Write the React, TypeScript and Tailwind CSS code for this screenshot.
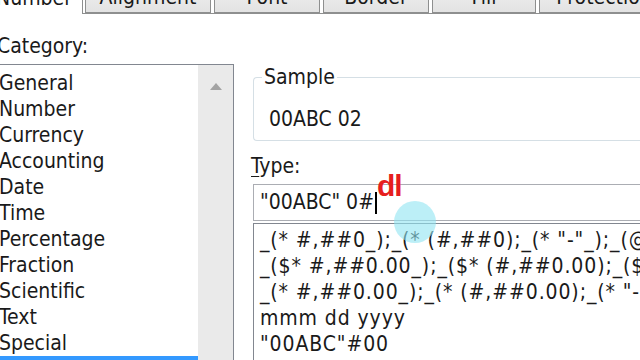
import React from 'react';

const categories = [
  'General',
  'Number',
  'Currency',
  'Accounting',
  'Date',
  'Time',
  'Percentage',
  'Fraction',
  'Scientific',
  'Text',
  'Special',
  'Custom',
];

const types = [
  '_(* #,##0_);_(* (#,##0);_(* "-"_);_(@_)',
  '_($* #,##0.00_);_($* (#,##0.00);_($* "-"??_);_(@_)',
  '_(* #,##0.00_);_(* (#,##0.00);_(* "-"??_);_(@_)',
  'mmm dd yyyy',
  '"00ABC"#00',
];

const tabs = [
  { label: 'Alignment', w: 'w-[126px]' },
  { label: 'Font', w: 'w-[106px]' },
  { label: 'Border', w: 'w-[106px]' },
  { label: 'Fill', w: 'w-[104px]' },
  { label: 'Protection', w: 'w-[130px]' },
];

const App: React.FC = () => {
  return (
    <div
      className="relative w-[640px] h-[360px] overflow-hidden bg-white text-[21px] text-[#1a1a1a]"
      style={{ fontFamily: '"DejaVu Sans Condensed", "DejaVu Sans", Tahoma, sans-serif' }}
    >
      {/* tab strip */}
      <div className="-mt-[20px] h-[34px] flex items-stretch">
        <div className="-ml-[14px] w-[97px] shrink-0 flex items-center justify-center border-r border-[#8e8f8f] bg-white leading-none pt-[2px]">
          Number
        </div>
        <div className="flex-1 min-w-0 flex items-stretch gap-[3px] pl-[2px] border-b border-[#8e8f8f] overflow-hidden">
          {tabs.map(t => (
            <div
              key={t.label}
              className={`${t.w} shrink-0 flex items-center justify-center border border-[#8e8f8f] bg-gradient-to-b from-[#f2f2f2] to-[#e3e3e3] leading-none pt-[2px]`}
            >
              {t.label}
            </div>
          ))}
        </div>
      </div>

      <div className="flex">
        {/* left column */}
        <div className="-ml-[3px] w-[237px] shrink-0 flex flex-col">
          <div className="mt-[19px] h-[26px] leading-[26px]">Category:</div>
          <div className="mt-[5px] h-[300px] flex border-t border-r border-[#828790]">
            <div className="flex-1 pt-[5px]">
              {categories.map(c => (
                <div
                  key={c}
                  className={`h-[26px] leading-[26px] pl-[2px] ${c === 'Custom' ? 'bg-[#3399ff] text-white' : ''}`}
                >
                  {c}
                </div>
              ))}
            </div>
            <div className="w-[35px] bg-[#eaeaea] flex justify-center pt-[18px]">
              <svg width="12" height="7" viewBox="0 0 12 7">
                <path d="M6 0 L12 7 L0 7 Z" fill="#a3a3a3" />
              </svg>
            </div>
          </div>
        </div>

        {/* right column */}
        <div className="ml-[19px] flex-1 flex flex-col">
          <div className="mt-[63px] relative h-[64px] border border-[#d5dfe5] rounded-[4px] rounded-r-none border-r-0">
            <div className="absolute -top-[14px] left-[8px] bg-white px-[2px] h-[26px] leading-[26px]">Sample</div>
            <div className="pl-[15px] pt-[28px] h-[26px] leading-[26px]">00ABC 02</div>
          </div>
          <div className="mt-[12px] -ml-[2px] h-[26px] leading-[26px]">
            <span className="underline underline-offset-[3px] decoration-1">T</span>ype:
          </div>
          <div className="mt-[5px] h-[37px] border border-r-0 border-[#abadb3] flex items-center pl-[6px]">
            <span>"00ABC" 0#</span>
            <span className="ml-[1px] w-[2px] h-[22px] bg-black" />
          </div>
          <div className="mt-[2px] flex-1 border-t border-l border-[#828790] pt-[3px] pl-[6px] whitespace-nowrap tracking-[0.9px]">
            {types.map(t => (
              <div key={t} className="h-[26px] leading-[26px]">
                {t}
              </div>
            ))}
          </div>
        </div>
      </div>

      {/* click marker overlays */}
      <div
        className="absolute left-[377px] top-[171px] text-[30px] font-bold text-[#e61e1e] leading-none tracking-[-1px]"
        style={{ fontFamily: '"Liberation Sans", Arial, sans-serif' }}
      >
        dl
      </div>
      <div className="absolute left-[394px] top-[201px] w-[42px] h-[42px] rounded-full bg-[#8fe4f2]/60" />
    </div>
  );
};

export default App;
